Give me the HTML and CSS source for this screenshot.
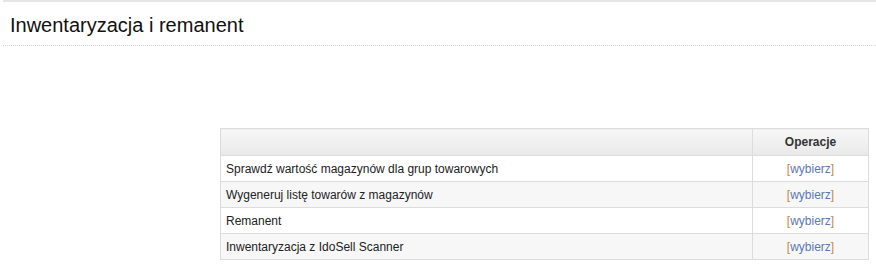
FILE: index.html
```html
<!DOCTYPE html>
<html lang="pl">
<head>
  <meta charset="UTF-8">
  <title>Inwentaryzacja i remanent</title>
  <link rel="stylesheet" href="styles.css">
</head>
<body>
  <div class="page-head">
    <h1>Inwentaryzacja i remanent</h1>
  </div>

  <div class="content">
    <table class="list">
      <thead>
        <tr>
          <th></th>
          <th class="ops">Operacje</th>
        </tr>
      </thead>
      <tbody>
        <tr>
          <td>Sprawdź wartość magazynów dla grup towarowych</td>
          <td class="ops">[<a href="#">wybierz</a>]</td>
        </tr>
        <tr>
          <td>Wygeneruj listę towarów z magazynów</td>
          <td class="ops">[<a href="#">wybierz</a>]</td>
        </tr>
        <tr>
          <td>Remanent</td>
          <td class="ops">[<a href="#">wybierz</a>]</td>
        </tr>
        <tr>
          <td>Inwentaryzacja z IdoSell Scanner</td>
          <td class="ops">[<a href="#">wybierz</a>]</td>
        </tr>
      </tbody>
    </table>
  </div>
</body>
</html>
```

FILE: styles.css
```css
body {
  margin: 0;
  font-family: "Liberation Sans", Arial, sans-serif;
  color: #222;
  background: #fff;
}

/* Page title */
.page-head {
  margin-left: 3px;
  border-top: 2px solid #e6e6e6;
  border-bottom: 1px dotted #d4d4d4;
  padding: 12px 0 9px 7px;
}

.page-head h1 {
  margin: 0;
  font-size: 20px;
  font-weight: normal;
  line-height: 22px;
  color: #111;
}

.content {
  padding: 82px 7px 0 220px;
}

/* Table */
.list {
  width: 100%;
  border-collapse: collapse;
  font-size: 12px;
  border: 1px solid #dcdcdc;
}

.list th {
  height: 26px;
  padding: 0 6px;
  background: linear-gradient(#f7f7f7, #e9e9e9);
  border: 1px solid #dcdcdc;
  color: #333;
  font-weight: bold;
}

.list td {
  height: 25px;
  padding: 0 5px;
  border: 1px solid #dcdcdc;
}

.list tbody tr:nth-child(even) td {
  background: #f7f7f7;
}

.list .ops {
  width: 103px;
  text-align: center;
}

.list td.ops {
  color: #c8883a;
}

.list a {
  color: #5b78b4;
  text-decoration: none;
}
```
